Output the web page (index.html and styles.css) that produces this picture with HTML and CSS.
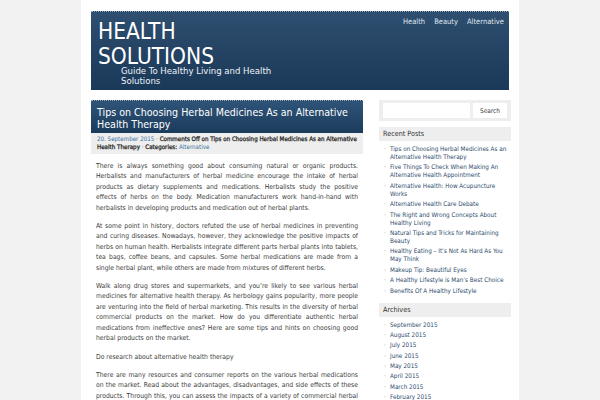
FILE: index.html
```html
<!DOCTYPE html>
<html>
<head>
<meta charset="utf-8">
<link rel="stylesheet" href="styles.css">
</head>
<body>
<div class="page">
  <header class="masthead">
    <div class="brand">
      <h1 class="site-title">HEALTH<br>SOLUTIONS</h1>
      <p class="tagline">Guide To Healthy Living and Health<br>Solutions</p>
    </div>
    <nav class="topnav">
      <a href="#">Health</a>
      <a href="#">Beauty</a>
      <a href="#">Alternative</a>
    </nav>
  </header>
  <div class="columns">
    <main class="main">
      <div class="post-head">
        <h2 class="post-title">Tips on Choosing Herbal Medicines As an Alternative Health Therapy</h2>
      </div>
      <div class="post-meta"><a href="#">20. September 2015</a> · <b>Comments Off on Tips on Choosing Herbal Medicines As an Alternative Health Therapy</b> · <b>Categories:</b> <a href="#">Alternative</a></div>
      <div class="post-body">
        <p>There is always something good about consuming natural or organic products. Herbalists and manufacturers of herbal medicine encourage the intake of herbal products as dietary supplements and medications. Herbalists study the positive effects of herbs on the body. Medication manufacturers work hand-in-hand with herbalists in developing products and medication out of herbal plants.</p>
        <p>At some point in history, doctors refuted the use of herbal medicines in preventing and curing diseases. Nowadays, however, they acknowledge the positive impacts of herbs on human health. Herbalists integrate different parts herbal plants into tablets, tea bags, coffee beans, and capsules. Some herbal medications are made from a single herbal plant, while others are made from mixtures of different herbs.</p>
        <p>Walk along drug stores and supermarkets, and you’re likely to see various herbal medicines for alternative health therapy. As herbology gains popularity, more people are venturing into the field of herbal marketing. This results in the diversity of herbal commercial products on the market. How do you differentiate authentic herbal medications from ineffective ones? Here are some tips and hints on choosing good herbal products on the market.</p>
        <p>Do research about alternative health therapy</p>
        <p>There are many resources and consumer reports on the various herbal medications on the market. Read about the advantages, disadvantages, and side effects of these products. Through this, you can assess the impacts of a variety of commercial herbal products before buying them.</p>
      </div>
    </main>
    <aside class="sidebar">
      <form class="search">
        <input class="search-input" type="text">
        <button class="search-btn" type="button">Search</button>
      </form>
      <h3 class="widget-title">Recent Posts</h3>
      <ul class="widget-list">
        <li><a href="#">Tips on Choosing Herbal Medicines As an Alternative Health Therapy</a></li>
        <li><a href="#">Five Things To Check When Making An Alternative Health Appointment</a></li>
        <li><a href="#">Alternative Health: How Acupuncture Works</a></li>
        <li><a href="#">Alternative Health Care Debate</a></li>
        <li><a href="#">The Right and Wrong Concepts About Healthy Living</a></li>
        <li><a href="#">Natural Tips and Tricks for Maintaining Beauty</a></li>
        <li><a href="#">Healthy Eating – It’s Not As Hard As You May Think</a></li>
        <li><a href="#">Makeup Tip: Beautiful Eyes</a></li>
        <li><a href="#">A Healthy Lifestyle is Man’s Best Choice</a></li>
        <li><a href="#">Benefits Of A Healthy Lifestyle</a></li>
      </ul>
      <h3 class="widget-title">Archives</h3>
      <ul class="widget-list">
        <li><a href="#">September 2015</a></li>
        <li><a href="#">August 2015</a></li>
        <li><a href="#">July 2015</a></li>
        <li><a href="#">June 2015</a></li>
        <li><a href="#">May 2015</a></li>
        <li><a href="#">April 2015</a></li>
        <li><a href="#">March 2015</a></li>
        <li><a href="#">February 2015</a></li>
      </ul>
    </aside>
  </div>
</div>
</body>
</html>
```
FILE: styles.css
```css
* { box-sizing: border-box; }
html, body { margin: 0; padding: 0; }
body {
  background: #f2f2f2;
  font-family: "DejaVu Sans Condensed", "DejaVu Sans", sans-serif;
  color: #333;
}
a { text-decoration: none; }
.page {
  width: 438px;
  margin: 0 auto;
  background: #fff;
  padding: 11px 10px 0;
  min-height: 400px;
}
.masthead {
  height: 79px;
  background: linear-gradient(#2f4f70, #1a3858);
  border-top: 1px dotted #9fb0c4;
  display: flex;
  justify-content: space-between;
  align-items: flex-start;
  padding: 0 5px 0 7px;
}
.site-title {
  margin: 0;
  padding-top: 7px;
  font-weight: normal;
  font-size: 22.5px;
  line-height: 25px;
  color: #fff;
}
.tagline {
  margin: -3px 0 0 23px;
  font-size: 9.5px;
  line-height: 10px;
  color: #eef2f6;
}
.topnav {
  display: flex;
  gap: 9px;
  padding-top: 5px;
  font-size: 7.5px;
}
.topnav a { color: #dfe6ee; }
.columns {
  display: flex;
  justify-content: space-between;
  margin-top: 10px;
}
.main { width: 272px; }
.post-head {
  background: linear-gradient(#2f5478, #1b3b5c);
  border-top: 1px dotted #9fb0c4;
  padding: 5px 6px 3px;
}
.post-title {
  margin: 0;
  font-weight: normal;
  font-size: 10.6px;
  line-height: 12px;
  color: #fff;
}
.post-meta {
  background: #eeeeee;
  padding: 2px 4px 3px 6px;
  font-size: 6.2px;
  line-height: 8px;
  color: #333;
}
.post-meta a { color: #3d6e9e; }
.post-meta b {
  font-weight: normal;
  color: #222;
  -webkit-text-stroke: 0.25px #222;
}
.post-body {
  padding: 7px 5px 0;
  font-size: 6.75px;
  line-height: 10.4px;
  text-align: justify;
  color: #3b3b3b;
}
.post-body p { margin: 0 0 8px; }
.sidebar { width: 132px; margin-right: -2px; }
.search {
  background: #eeeeee;
  padding: 3px 4px;
  display: flex;
  justify-content: space-between;
  margin: 0;
}
.search-input {
  width: 87px;
  height: 15px;
  border: none;
  background: #fff;
  padding: 0;
}
.search-btn {
  width: 34px;
  height: 15px;
  border: none;
  background: #fff;
  font-family: inherit;
  font-size: 6.5px;
  color: #444;
  padding: 0;
}
.widget-title {
  margin: 6px 0 0;
  background: #eeeeee;
  font-weight: normal;
  font-size: 7.2px;
  line-height: 12px;
  padding: 1px 4px;
  color: #333;
}
.widget-list {
  list-style: none;
  margin: 4px 0 8px;
  padding: 0 0 0 11px;
  font-size: 6.3px;
  line-height: 8px;
}
.widget-list li {
  position: relative;
  margin-bottom: 2.4px;
}
.widget-list li::before {
  content: "·";
  position: absolute;
  left: -6px;
  color: #888;
}
.widget-list a { color: #2c4a6b; }
```
